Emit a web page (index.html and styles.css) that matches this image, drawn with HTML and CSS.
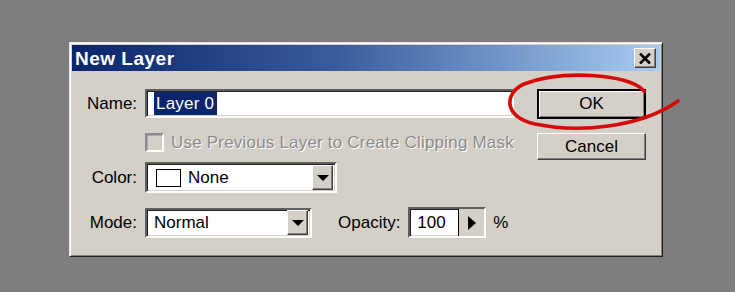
FILE: index.html
```html
<!DOCTYPE html>
<html lang="en">
<head>
  <meta charset="UTF-8" />
  <title>New Layer</title>
  <link rel="stylesheet" href="styles.css">
</head>
<body>

  <div class="dialog">
    <div class="titlebar">
      <span class="title">New Layer</span>
      <button class="close-btn">
        <svg width="12" height="11" viewBox="0 0 12 11"><path d="M1 0.5 L11 10.5 M11 0.5 L1 10.5" stroke="#000" stroke-width="2.6" /></svg>
      </button>
    </div>

    <div class="dialog-body">
      <div class="form">
        <div class="row row-name">
          <label class="label">Name:</label>
          <div class="field name-field"><span class="selected">Layer 0</span></div>
        </div>

        <div class="row row-check">
          <span class="label"></span>
          <span class="checkbox"></span>
          <span class="disabled-text">Use Previous Layer to Create Clipping Mask</span>
        </div>

        <div class="row row-color">
          <label class="label">Color:</label>
          <div class="field select color-select">
            <span class="swatch"></span>
            <span class="select-value">None</span>
            <span class="drop-btn"><span class="tri-down"></span></span>
          </div>
        </div>

        <div class="row row-mode">
          <label class="label">Mode:</label>
          <div class="field select mode-select">
            <span class="select-value">Normal</span>
            <span class="drop-btn"><span class="tri-down"></span></span>
          </div>
          <label class="opacity-label">Opacity:</label>
          <div class="field opacity-field">
            <span class="opacity-value">100</span>
            <span class="step-btn"><span class="tri-right"></span></span>
          </div>
          <span class="percent">%</span>
        </div>
      </div>

      <div class="buttons">
        <button class="btn btn-default">OK</button>
        <button class="btn">Cancel</button>
      </div>
    </div>
  </div>

  <!-- hand drawn marker round the OK button -->
  <svg class="marker" width="735" height="292" viewBox="0 0 735 292">
    <path d="M644 91 C 628 73, 560 70, 524 84 C 504 93, 503 117, 535 124 C 578 133, 640 128, 678 101"
          fill="none" stroke="#d50a0a" stroke-width="3.6" stroke-linecap="round" />
  </svg>

</body>
</html>
```

FILE: styles.css
```css
body {
  margin: 0;
  background: #7e7e7e;
  font-family: "Liberation Sans", Arial, sans-serif;
  font-size: 17px;
  color: #000;
  height: 292px;
  overflow: hidden;
}

.dialog {
  margin: 42px 0 0 69px;
  width: 588px;
  padding: 2px;
  background: #d4d0c8;
  border: 1px solid;
  border-color: #e8e6e0 #202020 #202020 #e8e6e0;
  box-shadow: inset 1px 1px #ffffff, inset -1px -1px #808080;
}

.titlebar {
  height: 26px;
  display: flex;
  align-items: center;
  justify-content: space-between;
  padding: 0 4px 0 3px;
  background: linear-gradient(to right, #0b246b, #3a5c9c 45%, #a8ccf2);
}

.title {
  color: #fff;
  font-weight: bold;
  font-size: 19px;
  letter-spacing: 0.5px;
  padding-top: 2px;
}

.close-btn {
  width: 22px;
  height: 20px;
  padding: 0;
  display: flex;
  align-items: center;
  justify-content: center;
  background: #d4d0c8;
  border: 1px solid;
  border-color: #fff #404040 #404040 #fff;
  box-shadow: inset -1px -1px #808080;
}

.dialog-body {
  display: flex;
  padding: 18px 14px 16px 15px;
}

.form {
  width: 427px;
  display: flex;
  flex-direction: column;
}

.row {
  display: flex;
  align-items: center;
}

.label {
  width: 50px;
  flex: none;
  text-align: right;
  margin-right: 8px;
}

.row-check { margin-top: 15px; height: 19px; }
.row-color { margin-top: 10px; }
.row-mode { margin-top: 14px; }

.field {
  box-sizing: border-box;
  background: #fff;
  border: 2px solid;
  border-color: #606060 #fff #fff #606060;
  box-shadow: inset 1px 1px #202020, inset -1px -1px #d4d0c8;
  display: flex;
  align-items: center;
}

.name-field {
  flex: 1;
  height: 29px;
  padding-left: 7px;
}

.selected {
  background: #0b246b;
  color: #fff;
  line-height: 23px;
  padding: 0 3px 0 2px;
  letter-spacing: 0.2px;
}

.checkbox {
  width: 15px;
  height: 15px;
  flex: none;
  border: 2px solid;
  border-color: #8a8a8a #fff #fff #8a8a8a;
  box-shadow: inset 1px 1px #a8a8a8;
  margin-right: 7px;
}

.disabled-text {
  color: #8c8c8c;
  text-shadow: 1px 1px #fff;
  letter-spacing: 0.2px;
}

.select {
  height: 31px;
  padding-right: 2px;
}

.color-select { width: 192px; }

.mode-select {
  width: 167px;
  height: 30px;
}

.swatch {
  width: 23px;
  height: 16px;
  margin: 0 7px 0 9px;
  border: 1px solid #000;
  background: #fff;
}

.select-value {
  flex: 1;
}

.mode-select .select-value { padding-left: 7px; }

.drop-btn,
.step-btn {
  display: flex;
  align-items: center;
  justify-content: center;
  box-sizing: border-box;
  background: #d4d0c8;
  border: 1px solid;
  border-color: #fff #404040 #404040 #fff;
  box-shadow: inset -1px -1px #808080;
}

.drop-btn {
  width: 21px;
  height: 25px;
}

.tri-down {
  width: 0;
  height: 0;
  border-left: 6px solid transparent;
  border-right: 6px solid transparent;
  border-top: 6px solid #000;
}

.opacity-label {
  margin-left: 26px;
  margin-right: 8px;
}

.opacity-field {
  width: 78px;
  height: 31px;
}

.opacity-value {
  width: 48px;
  padding-left: 7px;
  box-sizing: border-box;
}

.step-btn {
  flex: 1;
  align-self: stretch;
  border-color: #000 #fff #fff #000;
  border-width: 0 0 0 1px;
  box-shadow: none;
}

.tri-right {
  width: 0;
  height: 0;
  border-top: 7px solid transparent;
  border-bottom: 7px solid transparent;
  border-left: 8px solid #000;
}

.percent {
  margin-left: 7px;
}

.buttons {
  width: 109px;
  margin-left: 23px;
  display: flex;
  flex-direction: column;
}

.btn {
  height: 27px;
  padding: 0;
  font: inherit;
  background: #d4d0c8;
  border: 1px solid;
  border-color: #fff #404040 #404040 #fff;
  box-shadow: inset -1px -1px #808080;
  margin-top: 14px;
}

.btn-default {
  height: 30px;
  margin-top: 0;
  border: 2px solid #000;
  box-shadow: inset 1px 1px #fff, inset -1px -1px #808080;
}

.marker {
  position: absolute;
  top: 0;
  left: 0;
  pointer-events: none;
}
```
